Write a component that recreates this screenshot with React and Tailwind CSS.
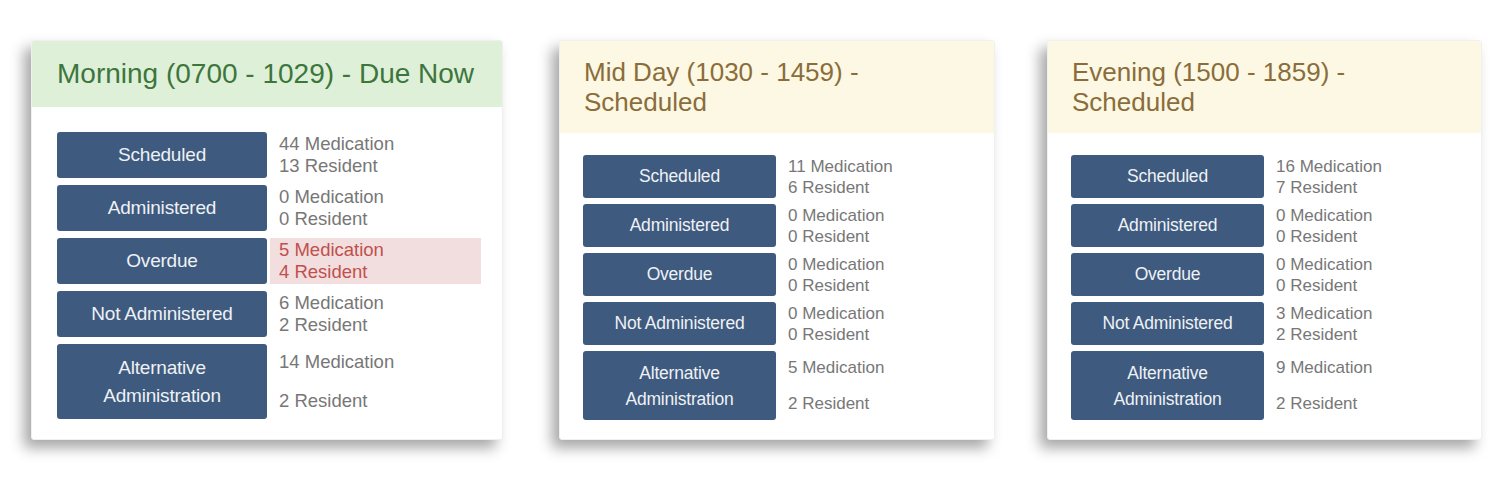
import React from 'react'

const shifts = [
  {
    title: 'Morning (0700 - 1029) - Due Now',
    rows: [
      { label: 'Scheduled', med: 44, res: 13 },
      { label: 'Administered', med: 0, res: 0 },
      { label: 'Overdue', med: 5, res: 4, alert: true },
      { label: 'Not Administered', med: 6, res: 2 },
      { label: 'Alternative Administration', med: 14, res: 2, tall: true },
    ],
  },
  {
    title: 'Mid Day (1030 - 1459) - Scheduled',
    rows: [
      { label: 'Scheduled', med: 11, res: 6 },
      { label: 'Administered', med: 0, res: 0 },
      { label: 'Overdue', med: 0, res: 0 },
      { label: 'Not Administered', med: 0, res: 0 },
      { label: 'Alternative Administration', med: 5, res: 2, tall: true },
    ],
  },
  {
    title: 'Evening (1500 - 1859) - Scheduled',
    rows: [
      { label: 'Scheduled', med: 16, res: 7 },
      { label: 'Administered', med: 0, res: 0 },
      { label: 'Overdue', med: 0, res: 0 },
      { label: 'Not Administered', med: 3, res: 2 },
      { label: 'Alternative Administration', med: 9, res: 2, tall: true },
    ],
  },
]

// big = the first (due now) card, which is drawn a little larger
function ShiftCard({ shift, big, className }) {
  const header = big
    ? 'h-[66px] bg-[#dff0d8] text-[#3c763d] text-[28px] leading-[34px] pl-[25px] flex items-center'
    : 'h-[92px] bg-[#fcf8e3] text-[#8a6d3b] text-[26px] leading-[30px] pl-[24px] pr-[120px] pt-[16px]'

  return (
    <div className={`bg-white rounded-[3px] border border-[#f0f0f0] shadow-[-7px_8px_14px_rgba(0,0,0,0.35)] overflow-hidden ${className}`}>
      <div className={header}>{shift.title}</div>

      <div className={big ? 'pt-[25px] pl-[25px] flex flex-col gap-[7px]' : 'pt-[22px] pl-[23px] flex flex-col gap-[6px]'}>
        {shift.rows.map((row) => (
          <div key={row.label} className="flex">
            <div
              className={`shrink-0 bg-[#3e5a7e] rounded-[3px] text-[#eef1f5] tracking-[-0.2px] flex items-center justify-center text-center ${
                big
                  ? `w-[210px] text-[19px] ${row.tall ? 'h-[75px] leading-[28px] px-[30px]' : 'h-[46px]'}`
                  : `w-[193px] text-[17.5px] ${row.tall ? 'h-[69px] leading-[26px] px-[30px]' : 'h-[43px]'}`
              }`}
            >
              {row.label}
            </div>
            <div
              className={`flex flex-col ${row.tall ? 'justify-between' : 'justify-center'} ${
                big ? 'ml-[3px] w-[211px] pl-[9px] text-[18.5px] leading-[22px]' : 'ml-[3px] pl-[9px] text-[17px] leading-[21px]'
              } ${row.tall ? (big ? 'py-[7px]' : 'py-[6px]') : ''} ${
                row.alert ? 'bg-[#f2dede] text-[#c0504d]' : 'text-[#777777]'
              }`}
            >
              <span>{row.med} Medication</span>
              <span>{row.res} Resident</span>
            </div>
          </div>
        ))}
      </div>
    </div>
  )
}

export default function App() {
  return (
    <div className="w-[1504px] h-[481px] bg-white font-[family-name:Liberation_Sans,Arial,sans-serif]">
      <div className="flex items-start pt-[40px] pl-[31px]">
        <ShiftCard shift={shifts[0]} big className="w-[472px] h-[400px]" />
        <ShiftCard shift={shifts[1]} className="ml-[56px] w-[436px] h-[400px]" />
        <ShiftCard shift={shifts[2]} className="ml-[52px] w-[435px] h-[400px]" />
      </div>
    </div>
  )
}
